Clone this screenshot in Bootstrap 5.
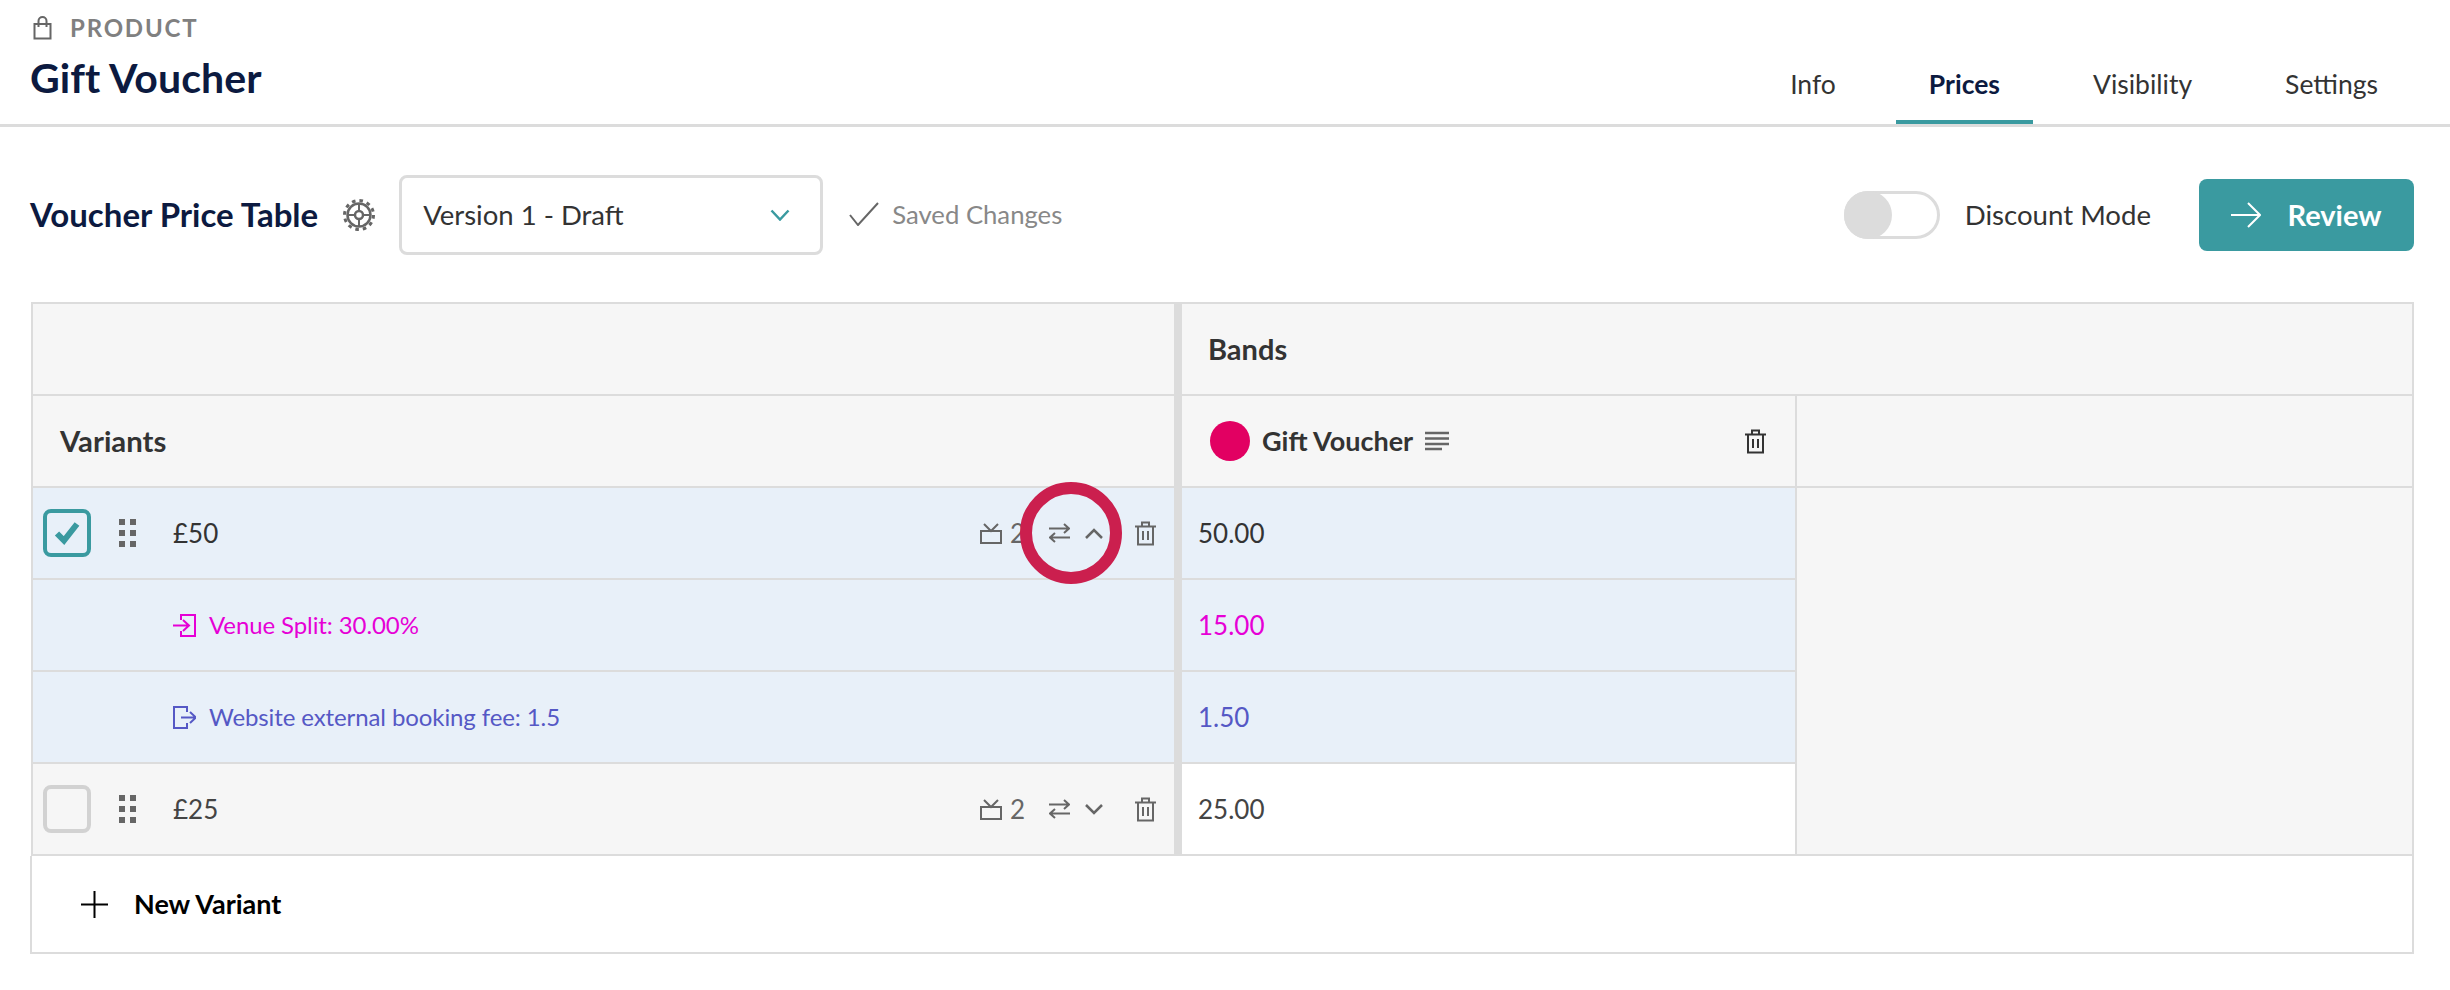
<!DOCTYPE html>
<html lang="en">
<head>
  <meta charset="UTF-8">
  <title>Gift Voucher - Prices</title>
  <link href="https://cdn.jsdelivr.net/npm/bootstrap@5.3.0/dist/css/bootstrap.min.css" rel="stylesheet">
  <style>
    body {
      font-family: "Lato", "Liberation Sans", sans-serif;
      font-size: 26px;
      color: #333;
      background: #fff;
    }
    svg { display: block; flex: none; fill: none; stroke: currentColor; stroke-width: 2; }

    /* page header */
    .page-head {
      height: 127px;
      border-bottom: 3px solid #dcdcdc;
      padding: 0 39px 0 30px;
    }
    .head-label { color: #808080; font-size: 24px; font-weight: 700; letter-spacing: 1.8px; line-height: 1; padding-top: 16px; gap: 18px; }
    .head-label svg { margin-left: 3px; color: #666; }
    .head-title { color: #0c1a40; font-size: 41px; font-weight: 700; line-height: 1; margin: 17px 0 0; letter-spacing: .1px; }
    .head-tabs { gap: 27px; }
    .head-tabs .nav-link {
      color: #333;
      font-size: 26.500px;
      line-height: 1;
      padding: 0 33px;
      height: 124px;
      display: flex;
      align-items: flex-end;
      padding-bottom: 23px;
      border-bottom: 4px solid transparent;
    }
    .head-tabs .nav-link.active { color: #0c1a40; font-weight: 700; border-bottom-color: #3a9aa0; }

    /* toolbar */
    .tool-bar { height: 175px; padding: 0 36px 0 30px; }
    .tool-title { color: #0c1a40; font-size: 33px; font-weight: 700; }
    .tool-gear { color: #666; margin: 0 24px 0 25px; }
    .version-pick {
      width: 424px;
      height: 80px;
      border: 3px solid #dcdcdc;
      border-radius: 8px;
      padding: 0 30px 0 21px;
      font-size: 27.500px;
    }
    .version-pick svg { color: #3a9aa0; }
    .saved-note { color: #888; font-size: 25.700px; margin-left: 26px; gap: 13px; }
    .saved-note svg { color: #666; }
    .mode-toggle {
      width: 96px;
      height: 48px;
      border: 3px solid #dcdcdc;
      border-radius: 24px;
      position: relative;
    }
    .mode-toggle::before {
      content: "";
      position: absolute;
      left: -3px;
      top: -3px;
      width: 48px;
      height: 48px;
      border-radius: 50%;
      background: #dcdcdc;
    }
    .mode-label { font-size: 27.600px; margin: 0 48px 0 25px; }
    .review-btn {
      width: 215px;
      height: 72px;
      background: #3a9aa0;
      border: 0;
      border-radius: 8px;
      color: #fff;
      font-size: 29px;
      font-weight: 700;
      gap: 26px;
    }
    .review-btn:hover { background: #3a9aa0; color: #fff; }

    /* price table */
    .price-wrap { padding: 0 36px 0 31px; }
    .price-table {
      width: 2383px;
      table-layout: fixed;
      border-collapse: separate;
      border-spacing: 0;
      border-top: 2px solid #dcdcdc;
      border-left: 2px solid #dcdcdc;
      border-right: 2px solid #dcdcdc;
    }
    .price-table td, .price-table th {
      height: 92px;
      padding: 0;
      border-bottom: 2px solid #dcdcdc;
      background: #f6f6f6;
      font-weight: 400;
      vertical-align: middle;
    }
    .price-table .col-left { width: 1149px; border-right: 8px solid #dcdcdc; }
    .price-table .col-band { width: 616px; border-right: 2px solid #dcdcdc; padding-left: 16px; }
    .price-table .head-cell { font-size: 29px; font-weight: 700; padding-left: 26px; }
    .price-table .variants-head { font-size: 29.300px; padding-left: 27px; font-weight: 700; }
    .price-table .row-open td.paint { background: #e8f0f9; }
    .price-table .plain-value { background: #fff; }
    .price-table .no-rule { border-right: 0; }

    .variant-line { padding-left: 10px; padding-right: 18px; height: 90px; position: relative; }
    .tick-box {
      width: 48px;
      height: 48px;
      border: 4px solid #d2d2d2;
      border-radius: 8px;
      color: #3a9aa0;
      margin-right: 28px;
    }
    .tick-box.on { border-color: #3a9aa0; }
    .drag-dots { color: #666; margin-right: 37px; }
    .drag-dots rect { fill: currentColor; stroke: none; }
    .variant-tools { color: #666; margin-left: auto; }
    .count-num { margin: 0 0 0 8px; width: 39px; line-height: 1; }
    .swap-ico { margin-right: 15px; }
    .chev-ico { margin-right: 32px; }
    .call-ring {
      position: absolute;
      left: 987px;
      top: -6px;
      width: 102px;
      height: 102px;
      border: 12px solid #cb1f4e;
      border-radius: 50%;
    }
    .sub-line { font-size: 24px; letter-spacing: -.1px; padding-left: 140px; gap: 13px; }
    .tone-split { color: #e600d6; }
    .tone-fee { color: #5558c5; }
    .band-dot { width: 40px; height: 40px; border-radius: 50%; background: #e20062; margin-right: 12px; }
    .band-head { font-size: 27px; padding-left: 28px; padding-right: 29px; font-weight: 700; }
    .band-head .line-ico { color: #666; margin-left: 12px; }
    .faded-row { color: #444; }

    .add-row {
      margin-left: -1px;
      width: 2384px;
      height: 98px;
      border: 2px solid #dcdcdc;
      border-top: 0;
      padding-left: 49px;
      color: #000;
      font-size: 27px;
      font-weight: 700;
      gap: 26px;
    }
  </style>
</head>
<body>
  <!-- header -->
  <header class="page-head d-flex justify-content-between">
    <div>
      <div class="head-label d-flex align-items-center">
        <svg width="19" height="24" viewBox="0 0 19 24"><path d="M1.500 8h16v14.500h-16z"/><path d="M5.500 11V5a4 4 0 0 1 8 0v6"/></svg>
        <span>PRODUCT</span>
      </div>
      <h1 class="head-title">Gift Voucher</h1>
    </div>
    <nav class="nav head-tabs">
      <a class="nav-link" href="#">Info</a>
      <a class="nav-link active" href="#">Prices</a>
      <a class="nav-link" href="#">Visibility</a>
      <a class="nav-link" href="#">Settings</a>
    </nav>
  </header>

  <!-- toolbar -->
  <section class="tool-bar d-flex align-items-center">
    <span class="tool-title">Voucher Price Table</span>
    <svg class="tool-gear" width="32" height="32" viewBox="0 0 32 32">
      <circle cx="16" cy="16" r="14.500" stroke-width="3" stroke-dasharray="3.600 3.990"/>
      <circle cx="16" cy="16" r="11.500" stroke-width="2.500"/>
      <circle cx="16" cy="16" r="4" stroke-width="2.500"/>
      <path d="M16 5v7M16 20v7M5 16h7M20 16h7" stroke-width="2"/>
    </svg>
    <div class="version-pick d-flex align-items-center justify-content-between">
      <span>Version 1 - Draft</span>
      <svg width="20" height="12" viewBox="0 0 20 12"><path d="M1.500 1.500l8.500 9 8.500-9" stroke-width="2.500"/></svg>
    </div>
    <div class="saved-note d-flex align-items-center">
      <svg width="30" height="24" viewBox="0 0 30 24"><path d="M1 13l8 10L29 1"/></svg>
      <span>Saved Changes</span>
    </div>
    <div class="ms-auto d-flex align-items-center">
      <span class="mode-toggle"></span>
      <span class="mode-label">Discount Mode</span>
      <button class="btn review-btn d-flex align-items-center justify-content-center" type="button">
        <svg width="30" height="26" viewBox="0 0 30 26"><path d="M0 13h28M17 1l12 12-12 12"/></svg>
        Review
      </button>
    </div>
  </section>

  <!-- price table -->
  <div class="price-wrap">
    <table class="price-table">
      <tr>
        <td class="col-left"></td>
        <td class="head-cell" colspan="2">Bands</td>
      </tr>
      <tr>
        <td class="col-left variants-head">Variants</td>
        <td class="col-band" style="padding-left:0">
          <div class="band-head d-flex align-items-center">
            <span class="band-dot"></span>
            <span>Gift Voucher</span>
            <svg class="line-ico" width="24" height="20" viewBox="0 0 24 20"><path d="M0 2h24M0 7.500h24M0 13h24M0 18h17" stroke-width="2.500"/></svg>
            <svg class="ms-auto" width="21" height="25" viewBox="0 0 21 25"><path d="M0 5.500h21M7 5V1.500h7V5M3 5.500v18h15v-18M8 10v9M13 10v9"/></svg>
          </div>
        </td>
        <td></td>
      </tr>
      <tr class="row-open">
        <td class="col-left paint">
          <div class="variant-line d-flex align-items-center">
            <span class="tick-box on d-flex align-items-center justify-content-center">
              <svg width="26" height="24" viewBox="0 0 26 24"><path d="M3 12.500l7 7L23 3" stroke-width="6"/></svg>
            </span>
            <svg class="drag-dots" width="17" height="28" viewBox="0 0 17 28"><rect width="6" height="6"/><rect x="11" width="6" height="6"/><rect y="11" width="6" height="6"/><rect x="11" y="11" width="6" height="6"/><rect y="22" width="6" height="6"/><rect x="11" y="22" width="6" height="6"/></svg>
            <span>£50</span>
            <div class="variant-tools d-flex align-items-center">
              <svg width="22" height="21" viewBox="0 0 22 21"><path d="M1 8h20v12H1zM4 1l7 7 7-7"/></svg>
              <span class="count-num">2</span>
              <svg class="swap-ico" width="21" height="20" viewBox="0 0 21 20"><path d="M0 5.500h20M15 1l5 4.500-5 4.500M21 14.500H1M6 10l-5 4.500L6 19" stroke-width="2"/></svg>
              <svg class="chev-ico" width="18" height="11" viewBox="0 0 18 11"><path d="M1 10l8-8 8 8" stroke-width="2.500"/></svg>
              <svg width="21" height="25" viewBox="0 0 21 25"><path d="M0 5.500h21M7 5V1.500h7V5M3 5.500v18h15v-18M8 10v9M13 10v9"/></svg>
            </div>
            <span class="call-ring"></span>
          </div>
        </td>
        <td class="col-band paint">50.00</td>
        <td rowspan="4" class="no-rule"></td>
      </tr>
      <tr class="row-open">
        <td class="col-left paint">
          <div class="sub-line tone-split d-flex align-items-center">
            <svg width="23" height="23" viewBox="0 0 23 23"><path d="M8 6V1h14v21H8v-5M0 11.500h15M10 6l6 5.500-6 5.500"/></svg>
            <span>Venue Split: 30.00%</span>
          </div>
        </td>
        <td class="col-band paint tone-split">15.00</td>
      </tr>
      <tr class="row-open">
        <td class="col-left paint">
          <div class="sub-line tone-fee d-flex align-items-center">
            <svg width="23" height="23" viewBox="0 0 23 23"><path d="M14 6V1H1v21h13v-5M8 11.500h14M17 6l6 5.500-6 5.500"/></svg>
            <span>Website external booking fee: 1.5</span>
          </div>
        </td>
        <td class="col-band paint tone-fee">1.50</td>
      </tr>
      <tr class="faded-row">
        <td class="col-left">
          <div class="variant-line d-flex align-items-center">
            <span class="tick-box"></span>
            <svg class="drag-dots" width="17" height="28" viewBox="0 0 17 28"><rect width="6" height="6"/><rect x="11" width="6" height="6"/><rect y="11" width="6" height="6"/><rect x="11" y="11" width="6" height="6"/><rect y="22" width="6" height="6"/><rect x="11" y="22" width="6" height="6"/></svg>
            <span>£25</span>
            <div class="variant-tools d-flex align-items-center">
              <svg width="22" height="21" viewBox="0 0 22 21"><path d="M1 8h20v12H1zM4 1l7 7 7-7"/></svg>
              <span class="count-num">2</span>
              <svg class="swap-ico" width="21" height="20" viewBox="0 0 21 20"><path d="M0 5.500h20M15 1l5 4.500-5 4.500M21 14.500H1M6 10l-5 4.500L6 19" stroke-width="2"/></svg>
              <svg class="chev-ico" width="18" height="11" viewBox="0 0 18 11"><path d="M1 1l8 8 8-8" stroke-width="2.500"/></svg>
              <svg width="21" height="25" viewBox="0 0 21 25"><path d="M0 5.500h21M7 5V1.500h7V5M3 5.500v18h15v-18M8 10v9M13 10v9"/></svg>
            </div>
          </div>
        </td>
        <td class="col-band plain-value">25.00</td>
      </tr>
    </table>
    <div class="add-row d-flex align-items-center">
      <svg width="27" height="27" viewBox="0 0 27 27"><path d="M13.500 0v27M0 13.500h27"/></svg>
      <span>New Variant</span>
    </div>
  </div>
</body>
</html>
